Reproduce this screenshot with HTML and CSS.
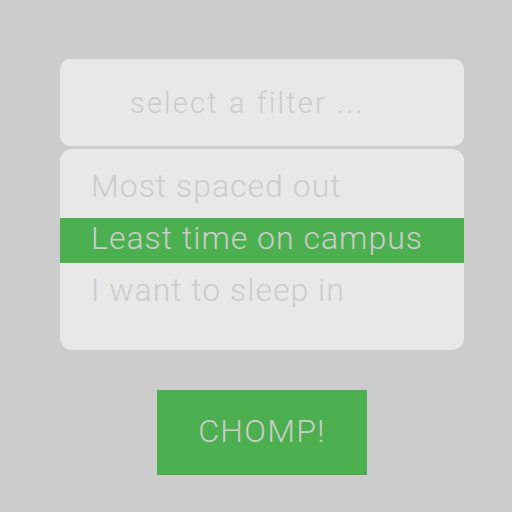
FILE: index.html
```html
<!DOCTYPE html>
<html>
<head>
<meta charset="utf-8">
<link rel="stylesheet" href="styles.css">
</head>
<body>
<div class="panel">
  <div class="select">select a filter ...</div>
  <ul class="options">
    <li class="option">Most spaced out</li>
    <li class="option selected">Least time on campus</li>
    <li class="option">I want to sleep in</li>
  </ul>
  <div class="actions">
    <button class="chomp">CHOMP!</button>
  </div>
</div>
</body>
</html>
```
FILE: styles.css
```css
html, body {
  margin: 0;
  padding: 0;
  background: #cccccc;
  height: 100%;
}
body {
  font-family: Roboto, "Liberation Sans", sans-serif;
  font-weight: 300;
  color: #cccccc;
}
.panel {
  width: 404px;
  margin-left: 60px;
  padding-top: 59px;
}
.select {
  height: 87px;
  box-sizing: border-box;
  background: #e8e8e8;
  border-radius: 10px;
  padding-left: 70px;
  padding-top: 24px;
  font-size: 29px;
  line-height: 40px;
  letter-spacing: 2.2px;
  word-spacing: 1px;
}
.options {
  list-style: none;
  margin: 3px 0 0 0;
  padding: 17px 0 0 0;
  height: 201px;
  box-sizing: border-box;
  background: #e8e8e8;
  border-radius: 12px;
  overflow: hidden;
}
.option {
  height: 45px;
  line-height: 40px;
  margin-bottom: 7px;
  padding-left: 31px;
  font-size: 32px;
  letter-spacing: 1px;
}
.option.selected {
  background: #4caf50;
}
.actions {
  display: flex;
  justify-content: center;
  margin-top: 40px;
}
.chomp {
  width: 210px;
  height: 85px;
  border: none;
  border-radius: 0;
  background: #4caf50;
  color: #cccccc;
  font-family: Roboto, "Liberation Sans", sans-serif;
  font-weight: 300;
  font-size: 32px;
  letter-spacing: 1.3px;
  line-height: 82px;
  padding: 0 0 3px 0;
}
```
